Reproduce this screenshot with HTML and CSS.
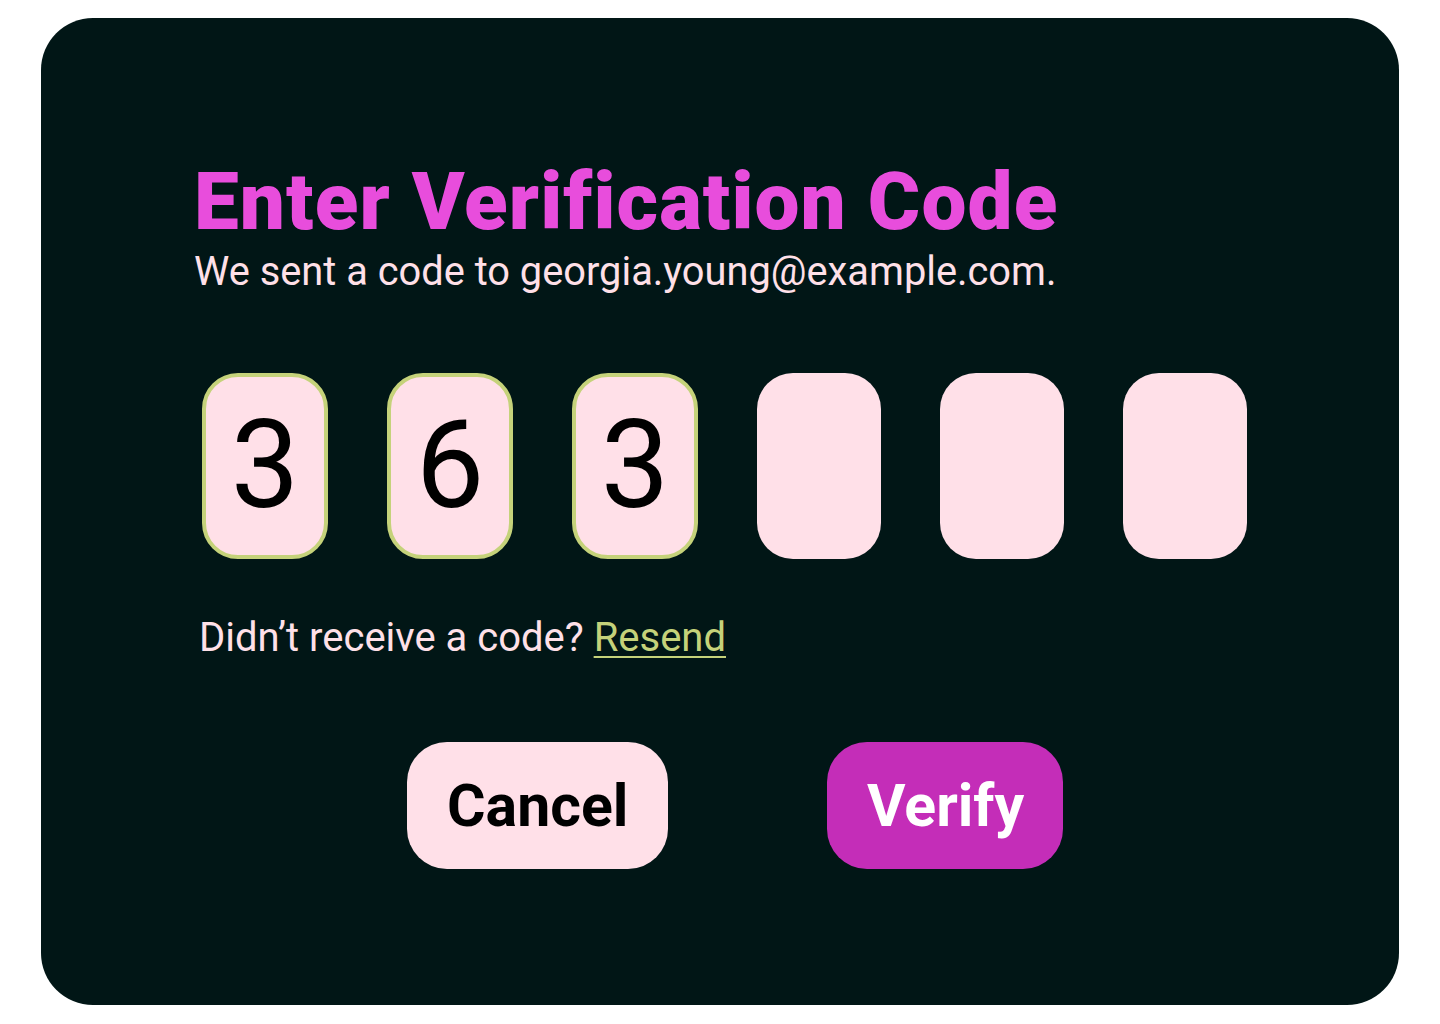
FILE: index.html
```html
<!DOCTYPE html>
<html lang="en">
<head>
<meta charset="utf-8">
<title>Enter Verification Code</title>
<link rel="stylesheet" href="styles.css">
</head>
<body>
<main class="card">
  <h1 class="title">Enter Verification Code</h1>
  <p class="subtitle">We sent a code to georgia.young@example.com.</p>
  <div class="code-row">
    <div class="digit filled">3</div>
    <div class="digit filled">6</div>
    <div class="digit filled">3</div>
    <div class="digit"></div>
    <div class="digit"></div>
    <div class="digit"></div>
  </div>
  <p class="resend">Didn’t receive a code? <a class="resend-link" href="#">Resend</a></p>
  <div class="actions">
    <button class="btn btn-cancel" type="button">Cancel</button>
    <button class="btn btn-verify" type="button">Verify</button>
  </div>
</main>
</body>
</html>
```

FILE: styles.css
```css
html, body {
  margin: 0;
  padding: 0;
  background: #ffffff;
}

body {
  font-family: Roboto, "Liberation Sans", Arial, sans-serif;
}

.card {
  box-sizing: border-box;
  width: 1358px;
  height: 987px;
  margin: 18px 0 0 41px;
  padding: 144px 0 0 0;
  background: #011616;
  border-radius: 52px;
  display: flex;
  flex-direction: column;
  align-items: flex-start;
}

.title {
  margin: 0 0 0 153px;
  font-size: 80px;
  line-height: 80px;
  font-weight: 900;
  letter-spacing: 1.1px;
  color: #e84ddc;
  font-variant-ligatures: none;
}

.subtitle {
  margin: 6px 0 0 153px;
  font-size: 39.8px;
  line-height: 48px;
  font-weight: 400;
  color: #ffe0e8;
}

.code-row {
  display: flex;
  gap: 59px;
  margin: 77px 0 0 161px;
  align-items: center;
}

.digit {
  box-sizing: border-box;
  width: 124px;
  height: 186px;
  border-radius: 36px;
  background: #ffe0e8;
  color: #000000;
  font-size: 122px;
  line-height: 1;
  display: flex;
  align-items: center;
  justify-content: center;
}

.digit.filled {
  width: 126px;
  border: 4px solid #c5d27a;
}

.resend {
  margin: 55px 0 0 158px;
  font-size: 40px;
  line-height: 48px;
  color: #ffe0e8;
}

.resend-link {
  color: #c5d27a;
  text-decoration: underline;
  text-decoration-thickness: 2px;
  text-underline-offset: 5px;
}

.actions {
  display: flex;
  gap: 159px;
  margin: 80px 0 0 366px;
}

.btn {
  box-sizing: border-box;
  height: 127px;
  padding: 0 40px;
  border: none;
  border-radius: 40px;
  font-family: Roboto, "Liberation Sans", Arial, sans-serif;
  font-size: 59px;
  font-weight: 700;
  cursor: pointer;
}

.btn-cancel {
  width: 261px;
  background: #ffe0e8;
  color: #000000;
}

.btn-verify {
  width: 236px;
  background: #c42db8;
  color: #ffffff;
}
```
